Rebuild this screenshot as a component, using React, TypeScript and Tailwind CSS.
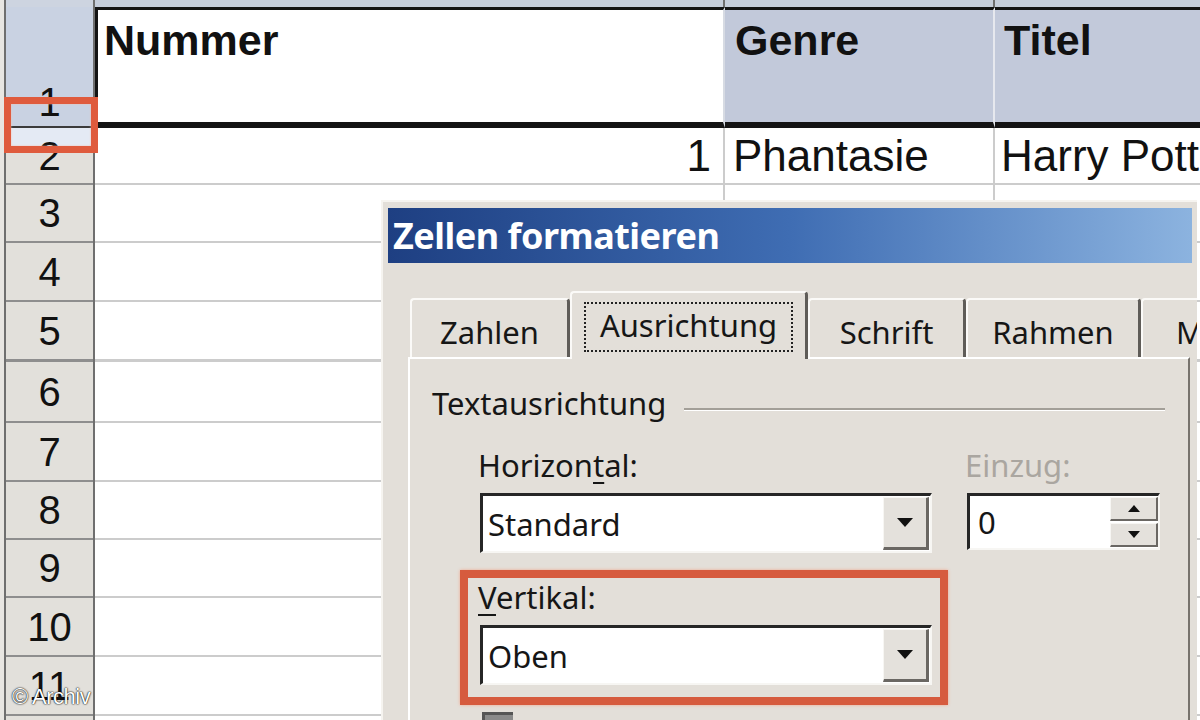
import type { ReactNode } from "react";

const bodyRows = [
  { n: 3, h: "h-[58px]", line: "border-b-2" },
  { n: 4, h: "h-[59px]", line: "border-b-2" },
  { n: 5, h: "h-[60px]", line: "border-b-[3px]" },
  { n: 6, h: "h-[61px]", line: "border-b-2" },
  { n: 7, h: "h-[59px]", line: "border-b-2" },
  { n: 8, h: "h-[58px]", line: "border-b-2" },
  { n: 9, h: "h-[58px]", line: "border-b-2" },
  { n: 10, h: "h-[59px]", line: "border-b-2" },
  { n: 11, h: "h-[59px]", line: "border-b-2" },
  { n: 12, h: "h-[59px]", line: "border-b-2" },
];

interface SheetRowProps {
  height: string;
  headerClass: string;
  header: ReactNode;
  children: ReactNode;
}

function SheetRow({ height, headerClass, header, children }: SheetRowProps) {
  return (
    <div className={`flex shrink-0 ${height}`}>
      <div className="w-[4px] shrink-0 bg-[#e8e6e2]" />
      <div className="w-[2px] shrink-0 bg-[#6f6f6f]" />
      <div className={`flex w-[87px] shrink-0 justify-center text-[40px] leading-none ${headerClass}`}>{header}</div>
      <div className="w-[2px] shrink-0 bg-[#6f6f6f]" />
      {children}
    </div>
  );
}

function DownTriangle({ w = 16, h = 9 }: { w?: number; h?: number }) {
  return (
    <svg width={w} height={h} viewBox={`0 0 ${w} ${h}`} aria-hidden>
      <polygon points={`0,0 ${w},0 ${w / 2},${h}`} fill="#111" />
    </svg>
  );
}

function UpTriangle({ w = 12, h = 7 }: { w?: number; h?: number }) {
  return (
    <svg width={w} height={h} viewBox={`0 0 ${w} ${h}`} aria-hidden>
      <polygon points={`0,${h} ${w},${h} ${w / 2},0`} fill="#111" />
    </svg>
  );
}

function ComboBox({ value, className = "" }: { value: string; className?: string }) {
  return (
    <div
      className={`flex h-[60px] w-[452px] border-t-[3px] border-l-[3px] border-r-2 border-b-2 border-t-[#262626] border-l-[#262626] border-r-[#f7f6f3] border-b-[#f7f6f3] bg-white ${className}`}
    >
      <span className="flex flex-1 items-center pl-[5px]">{value}</span>
      <div className="mt-[1px] mr-[1px] mb-[1px] flex w-[46px] items-center justify-center border-t border-l border-r-[3px] border-b-[3px] border-t-[#f7f6f3] border-l-[#f7f6f3] border-r-[#6a6763] border-b-[#6a6763] bg-[#e4e1dc]">
        <DownTriangle />
      </div>
    </div>
  );
}

function SpinButton({ up }: { up?: boolean }) {
  return (
    <div className="flex flex-1 items-center justify-center border-t border-l border-r-2 border-b-2 border-t-[#f7f6f3] border-l-[#f7f6f3] border-r-[#6a6763] border-b-[#6a6763] bg-[#e4e1dc]">
      {up ? <UpTriangle /> : <DownTriangle w={12} h={7} />}
    </div>
  );
}

function Tab({ label, width, active }: { label: string; width: string; active?: boolean }) {
  if (active) {
    return (
      <div
        className={`relative z-10 -mb-[2px] flex h-[68px] shrink-0 justify-center rounded-t-[4px] border-t-2 border-l-2 border-r-[3px] border-t-[#fbfaf8] border-l-[#fbfaf8] border-r-[#5f5c58] bg-[#e3dfd9] pt-[9px] ${width}`}
      >
        <span className="h-fit border-2 border-dotted border-[#222] px-[14px] pt-[3px] pb-[7px]">{label}</span>
      </div>
    );
  }
  return (
    <div
      className={`flex h-[59px] shrink-0 justify-center overflow-hidden rounded-t-[4px] border-t-2 border-l-2 border-r-[3px] border-t-[#fbfaf8] border-l-[#fbfaf8] border-r-[#5f5c58] pt-[14px] ${width}`}
    >
      {label}
    </div>
  );
}

function Dialog() {
  return (
    <div className="absolute top-[200px] left-[381px] h-[540px] w-[816px] overflow-hidden border-t-2 border-l-2 border-[#f6f4f0] bg-[#e3dfd9] px-[5px] pt-[6px] font-['Noto_Sans',sans-serif] text-[31px] leading-[36px] text-[#161616]">
      <div className="flex h-[55px] items-center bg-linear-to-r from-[#1e3f82] via-[#3f6db3] to-[#8cb3df] pl-[5px] text-[36px] font-bold tracking-[-0.5px] text-white">
        Zellen formatieren
      </div>

      <div className="mt-[28px] flex items-end pl-[22px]">
        <Tab label="Zahlen" width="w-[160px] border-r-0" />
        <Tab label="Ausrichtung" width="w-[238px]" active />
        <Tab label="Schrift" width="w-[158px]" />
        <Tab label="Rahmen" width="w-[175px]" />
        <Tab label="Muster" width="w-[120px] justify-start pl-[33px]" />
      </div>

      <div className="ml-[20px] h-[400px] w-[782px] border-t-2 border-l-2 border-r-2 border-t-white border-l-white border-r-[#77736d]">
        <div className="mt-[26px] flex items-start">
          <span className="ml-[22px]">Textausrichtung</span>
          <div className="mt-[23px] mr-[23px] ml-[18px] h-[3px] flex-1 border-t-2 border-b border-t-[#a39f98] border-b-white" />
        </div>

        <div className="mt-[26px] flex">
          <div className="ml-[68px] w-[454px]">
            <div>
              Horizon<span className="underline decoration-2 underline-offset-[5px]">t</span>al:
            </div>
            <ComboBox value="Standard" className="mt-[10px] ml-[2px]" />
          </div>
          <div className="ml-[33px]">
            <div className="text-[#aaa6a0]">Einzug:</div>
            <div className="mt-[10px] ml-[2px] flex h-[57px] w-[193px] border-t-[3px] border-l-[3px] border-r-2 border-b-2 border-t-[#262626] border-l-[#262626] border-r-[#f7f6f3] border-b-[#f7f6f3] bg-white">
              <span className="flex flex-1 items-center pl-[8px]">0</span>
              <div className="flex w-[48px] flex-col gap-[2px] py-[1px]">
                <SpinButton up />
                <SpinButton />
              </div>
            </div>
          </div>
        </div>

        <div className="mt-[17px] ml-[50px] w-[488px] border-[8px] border-[#d65b3e] pt-[1px] pb-[12px] pl-[10px] shadow-[0_0_3px_#f2a88f]">
          <div>
            <span className="underline decoration-2 underline-offset-[5px]">V</span>ertikal:
          </div>
          <ComboBox value="Oben" className="mt-[10px] ml-[2px]" />
        </div>

        <div className="mt-[7px] ml-[72px] h-[30px] w-[31px] border-t-[3px] border-l-[3px] border-[#555] bg-[#8a8a8a]" />
      </div>
    </div>
  );
}

export default function App() {
  return (
    <div className="relative h-[720px] w-[1200px] overflow-hidden bg-white font-['Liberation_Sans',Arial,sans-serif] text-[#111]">
      <div className="flex flex-col">
        {/* column header remnants */}
        <div className="flex h-[7px] shrink-0">
          <div className="w-[4px] bg-[#e8e6e2]" />
          <div className="w-[2px] bg-[#6f6f6f]" />
          <div className="w-[87px] bg-[#cdd4e0]" />
          <div className="w-[2px] bg-[#6f6f6f]" />
          <div className="w-[630px] border-r-2 border-[#6f6f6f] bg-[#c6cedb]" />
          <div className="w-[270px] border-r-2 border-[#6f6f6f] bg-[#c6cedb]" />
          <div className="flex-1 bg-[#c6cedb]" />
        </div>

        <SheetRow height="h-[121px]" headerClass="items-end border-b-2 border-[#3b3b3b] bg-[#c9d2e2] pb-[4px]" header="1">
          <div className="w-[630px] shrink-0 border-t-[3px] border-l-[3px] border-b-[6px] border-r-2 border-t-[#141414] border-l-[#141414] border-b-[#141414] border-r-[#d7dbe3] bg-white pt-[9px] pl-[6px] text-[43px] leading-none font-bold">
            Nummer
          </div>
          <div className="w-[270px] shrink-0 border-t-[3px] border-b-[6px] border-r-2 border-t-[#141414] border-b-[#141414] border-r-[#e6e8ee] bg-[#c2c9da] pt-[9px] pl-[10px] text-[43px] leading-none font-bold">
            Genre
          </div>
          <div className="flex-1 border-t-[3px] border-b-[6px] border-[#141414] bg-[#c2c9da] pt-[9px] pl-[9px] text-[43px] leading-none font-bold">
            Titel
          </div>
        </SheetRow>

        <SheetRow
          height="h-[57px]"
          headerClass="items-center border-b-2 border-[#8e8e8e] bg-[linear-gradient(to_bottom,#e4eaf4_0px,#e4eaf4_22px,#e2e0db_22px)]"
          header="2"
        >
          <div className="flex w-[630px] shrink-0 items-center justify-end border-r-2 border-b-2 border-[#cccccc] pr-[12px] text-[44px] leading-none">
            1
          </div>
          <div className="flex w-[270px] shrink-0 items-center border-r-2 border-b-2 border-[#cccccc] pl-[8px] text-[44px] leading-none">
            Phantasie
          </div>
          <div className="flex flex-1 items-center overflow-hidden border-b-2 border-[#cccccc] pl-[6px] text-[44px] leading-none whitespace-nowrap">
            Harry Potter
          </div>
        </SheetRow>

        {bodyRows.map((row) => (
          <SheetRow
            key={row.n}
            height={row.h}
            headerClass={`items-center border-[#8e8e8e] bg-[#e2e0db] ${row.line}`}
            header={row.n}
          >
            <div className={`w-[630px] shrink-0 border-r-2 border-[#cccccc] ${row.line}`} />
            <div className={`w-[270px] shrink-0 border-r-2 border-[#cccccc] ${row.line}`} />
            <div className={`flex-1 border-[#cccccc] ${row.line}`} />
          </SheetRow>
        ))}
      </div>

      {/* red highlight on the row border */}
      <div className="absolute top-[97px] left-[4px] h-[56px] w-[94px] border-[7px] border-[#df5b3d] shadow-[inset_0_0_2px_#f6b9a6]" />

      <Dialog />

      <div className="absolute top-[686px] left-[12px] text-[22px] leading-none tracking-[-0.5px] text-white [text-shadow:0_0_2px_#000,0_0_1px_#000]">
        © Archiv
      </div>
    </div>
  );
}
